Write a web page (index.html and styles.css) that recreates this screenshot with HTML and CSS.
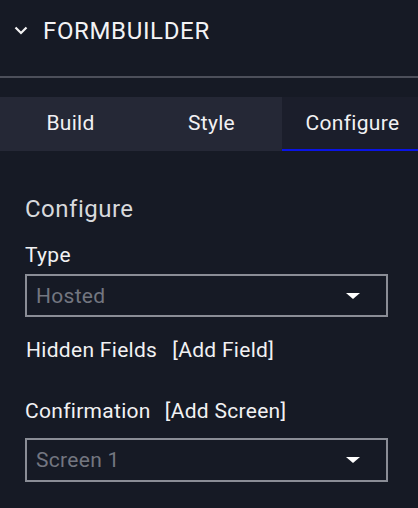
FILE: index.html
```html
<!DOCTYPE html>
<html lang="en">
<head>
<meta charset="utf-8">
<title>Formbuilder</title>
<link rel="stylesheet" href="styles.css">
</head>
<body>
<div class="panel">
  <header class="panel-header">
    <svg class="chevron" width="14" height="9" viewBox="0 0 14 9" aria-hidden="true">
      <path d="M1.5 1.5 L7 7 L12.5 1.5" fill="none" stroke="#f2f2f2" stroke-width="2.2"/>
    </svg>
    <span class="panel-title">FORMBUILDER</span>
  </header>
  <nav class="tabs">
    <div class="tab">Build</div>
    <div class="tab">Style</div>
    <div class="tab tab-active">Configure</div>
  </nav>
  <section class="content">
    <h2 class="section-title">Configure</h2>
    <div class="label label-type">Type</div>
    <div class="select">
      <span class="select-value">Hosted</span>
      <span class="caret"></span>
    </div>
    <div class="row row-hidden">
      <span class="label">Hidden Fields</span>
      <span class="link">[Add Field]</span>
    </div>
    <div class="row row-confirm">
      <span class="label">Confirmation</span>
      <span class="link">[Add Screen]</span>
    </div>
    <div class="select select-screen">
      <span class="select-value">Screen 1</span>
      <span class="caret"></span>
    </div>
  </section>
</div>
</body>
</html>
```
FILE: styles.css
```css
html, body {
  margin: 0;
  padding: 0;
  background: #161a25;
  font-family: Roboto, "Noto Sans", Arial, sans-serif;
  color: #f1f1f3;
  overflow: hidden;
}

.panel {
  width: 418px;
  height: 508px;
  overflow: hidden;
  background: #161a25;
}

.panel-header {
  height: 78px;
  box-sizing: border-box;
  padding: 17px 0 0 14px;
  display: flex;
  align-items: flex-start;
  border-bottom: 2px solid #4c4f5a;
}

.chevron {
  margin-top: 9px;
  margin-right: 15px;
  flex: none;
}

.panel-title {
  font-size: 24px;
  line-height: 28px;
  letter-spacing: 0.65px;
  color: #f3f3f5;
}

.tabs {
  margin-top: 19px;
  display: flex;
  width: 423px;
  height: 54px;
}

.tab {
  flex: none;
  width: 141px;
  box-sizing: border-box;
  height: 54px;
  background: #252836;
  font-size: 21px;
  line-height: 53px;
  letter-spacing: 0.3px;
  text-align: center;
  color: #f1f1f3;
}

.tab-active {
  background: #1b1e2b;
  border-bottom: 2px solid #0a14e6;
  line-height: 52px;
}

.content {
  padding: 44px 30px 0 25px;
}

.section-title {
  margin: 0;
  font-size: 24px;
  line-height: 28px;
  letter-spacing: 0.5px;
  font-weight: 400;
  color: #d8d9dc;
}

.label {
  font-size: 21px;
  line-height: 24px;
  letter-spacing: 0.3px;
  color: #f1f1f3;
}

.label-type {
  margin-top: 20px;
}

.select {
  margin-top: 7px;
  width: 363px;
  height: 43px;
  box-sizing: border-box;
  border: 2px solid #8a8d96;
  display: flex;
  align-items: center;
  padding: 0 26px 0 9px;
}

.select-value {
  flex: 1;
  font-size: 21px;
  line-height: 24px;
  letter-spacing: 0.3px;
  color: #737680;
}

.caret {
  width: 0;
  height: 0;
  border-left: 7px solid transparent;
  border-right: 7px solid transparent;
  border-top: 6px solid #ffffff;
}

.row {
  display: flex;
  align-items: baseline;
}

.row .link {
  font-size: 21px;
  line-height: 24px;
  letter-spacing: 0.3px;
  color: #f1f1f3;
  margin-left: 14px;
}

.row-hidden {
  margin-top: 21px;
  padding-left: 1px;
}

.row-hidden .link {
  margin-left: 15px;
}

.row-confirm {
  margin-top: 37px;
}

.select-screen {
  margin-top: 15px;
  height: 44px;
}
```
